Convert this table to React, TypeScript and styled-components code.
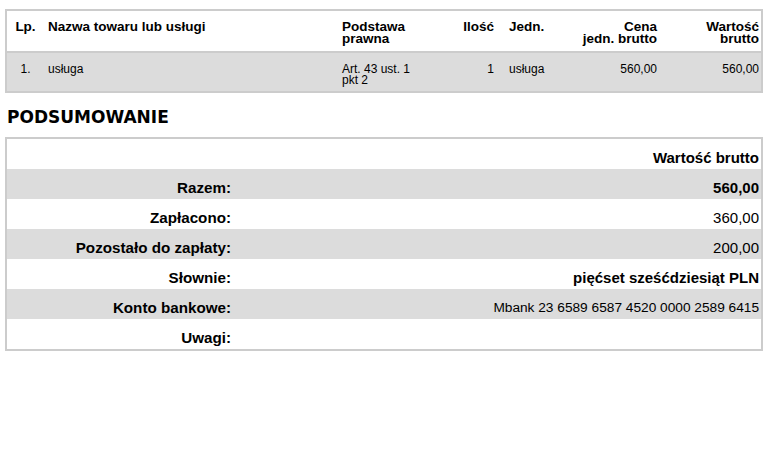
import React from "react";
import styled, { createGlobalStyle } from "styled-components";

const GlobalStyle = createGlobalStyle`
  html, body {
    margin: 0;
    padding: 0;
    background: #ffffff;
  }
  body {
    font-family: "Liberation Sans", Arial, sans-serif;
    color: #000000;
  }
`;

const Page = styled.div`
  width: 758px;
  padding: 9px 0 0 5px;
`;

const COLUMNS = "37px 294px 105px 55px 62px 101px 100px";

const ItemsTable = styled.div`
  border: 2px solid #cccccc;
`;

const HeaderRow = styled.div`
  display: grid;
  grid-template-columns: ${COLUMNS};
  box-sizing: border-box;
  height: 42px;
  background: #ffffff;
  border-bottom: 2px solid #cccccc;
`;

const ItemRow = styled.div`
  display: grid;
  grid-template-columns: ${COLUMNS};
  height: 38px;
  background: #dcdcdc;
`;

type CellProps = { $align: string; $pl: number; $pr: number };

const HeadCell = styled.div<CellProps>`
  padding: 10px ${(p) => p.$pr}px 0 ${(p) => p.$pl}px;
  text-align: ${(p) => p.$align};
  font-size: 13.5px;
  line-height: 12px;
  font-weight: bold;
  white-space: pre-line;
`;

const ItemCell = styled.div<CellProps>`
  padding: 11px ${(p) => p.$pr}px 0 ${(p) => p.$pl}px;
  text-align: ${(p) => p.$align};
  font-size: 12px;
  line-height: 11px;
  white-space: pre-line;
`;

const Heading = styled.h2`
  margin: 14px 0 10px 2px;
  font-family: "DejaVu Sans", Verdana, sans-serif;
  font-size: 17px;
  line-height: 20px;
  font-weight: bold;
`;

const SummaryTable = styled.div`
  border: 2px solid #cccccc;
`;

const SummaryRow = styled.div<{ $shaded?: boolean }>`
  display: grid;
  grid-template-columns: 228px 1fr;
  height: 30px;
  background: ${(p) => (p.$shaded ? "#dcdcdc" : "#ffffff")};
`;

const SummaryLabel = styled.div`
  align-self: end;
  padding: 0 4px 3px 0;
  text-align: right;
  font-size: 15.2px;
  line-height: 17px;
  font-weight: bold;
`;

const SummaryValue = styled.div<{ $bold?: boolean; $size?: number }>`
  align-self: end;
  padding: 0 2px 3px 0;
  text-align: right;
  font-size: ${(p) => p.$size ?? 15}px;
  line-height: 17px;
  font-weight: ${(p) => (p.$bold ? "bold" : "normal")};
`;

const columns = [
  { head: "Lp.", align: "center", pl: 0, pr: 0 },
  { head: "Nazwa towaru lub usługi", align: "left", pl: 4, pr: 4 },
  { head: "Podstawa\nprawna", align: "left", pl: 4, pr: 4 },
  { head: "Ilość", align: "right", pl: 0, pr: 4 },
  { head: "Jedn.", align: "left", pl: 11, pr: 0 },
  { head: "Cena\njedn. brutto", align: "right", pl: 0, pr: 4 },
  { head: "Wartość\nbrutto", align: "right", pl: 0, pr: 2 },
];

const items = [["1.", "usługa", "Art. 43 ust. 1\npkt 2", "1", "usługa", "560,00", "560,00"]];

const summary = [
  { label: "", value: "Wartość brutto", bold: true },
  { label: "Razem:", value: "560,00", bold: true, shaded: true },
  { label: "Zapłacono:", value: "360,00" },
  { label: "Pozostało do zapłaty:", value: "200,00", shaded: true },
  { label: "Słownie:", value: "pięćset sześćdziesiąt PLN", bold: true },
  { label: "Konto bankowe:", value: "Mbank 23 6589 6587 4520 0000 2589 6415", size: 13.7, shaded: true },
  { label: "Uwagi:", value: "" },
];

export default function App() {
  return (
    <Page>
      <GlobalStyle />
      <ItemsTable>
        <HeaderRow>
          {columns.map((c) => (
            <HeadCell key={c.head} $align={c.align} $pl={c.pl} $pr={c.pr}>
              {c.head}
            </HeadCell>
          ))}
        </HeaderRow>
        {items.map((row, i) => (
          <ItemRow key={i}>
            {row.map((v, j) => (
              <ItemCell key={j} $align={columns[j].align} $pl={columns[j].pl} $pr={columns[j].pr}>
                {v}
              </ItemCell>
            ))}
          </ItemRow>
        ))}
      </ItemsTable>

      <Heading>PODSUMOWANIE</Heading>

      <SummaryTable>
        {summary.map((r, i) => (
          <SummaryRow key={i} $shaded={r.shaded}>
            <SummaryLabel>{r.label}</SummaryLabel>
            <SummaryValue $bold={r.bold} $size={r.size}>
              {r.value}
            </SummaryValue>
          </SummaryRow>
        ))}
      </SummaryTable>
    </Page>
  );
}
